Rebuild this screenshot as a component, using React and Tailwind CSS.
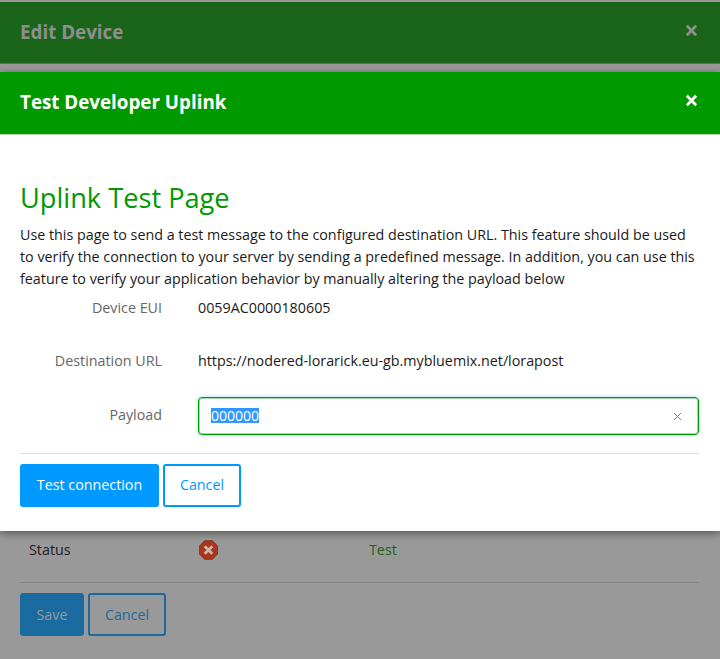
const font = "font-['Open_Sans',sans-serif]";

function Cross({ className }) {
  return (
    <svg viewBox="0 0 14 14" className={className} fill="none" stroke="currentColor" strokeWidth="3">
      <path d="M2 2 12 12M12 2 2 12" />
    </svg>
  );
}

function Row({ label, children, className }) {
  return (
    <div className={`flex items-center ${className}`}>
      <div className="w-[142px] text-right text-[#666666]">{label}</div>
      <div className="ml-[36px] flex-1 text-[#1a1a1a]">{children}</div>
    </div>
  );
}

export default function App() {
  return (
    <div className={`relative h-[659px] w-[720px] overflow-hidden bg-[#999999] pt-[2px] text-[14.3px] leading-[21px] ${font}`}>
      <div className="flex h-[62px] items-center justify-between border-b border-[#4f7a4f] bg-[#1b651b] pl-5 pr-[22px] text-[#8f8f8f]">
        <span className="text-[18.8px] font-bold">Edit Device</span>
        <Cross className="h-[13px] w-[13px] -translate-y-[2px]" />
      </div>

      <div className="mt-[475px] flex items-center pl-5 pr-[21px]">
        <div className="ml-[9px] w-[169px] text-[#1f1f1f]">Status</div>
        <div className="w-[171px]">
          <svg viewBox="0 0 20 20" className="ml-px h-5 w-[19px]">
            <path d="M6 0h8l6 6v8l-6 6H6l-6-6V6z" fill="#a8351c" stroke="#7f2a17" strokeWidth="0.6" />
            <path d="M6 6 14 14M14 6 6 14" stroke="#c9b4ae" strokeWidth="3" />
          </svg>
        </div>
        <span className="text-[#1b651b]">Test</span>
      </div>
      <div className="ml-5 mr-[21px] mt-[22px] h-px bg-[#858585]" />
      <div className="mx-5 mt-[10px] flex gap-1">
        <div className="flex h-[43px] w-[64px] items-center justify-center rounded-[3px] bg-[#1a6b9f] text-[#999999]">Save</div>
        <div className="flex h-[43px] w-[78px] items-center justify-center rounded-[3px] border-2 border-[#1a6b9f] text-[#1a6b9f]">Cancel</div>
      </div>

      <div className="absolute left-0 right-0 top-[72px] h-[459px] bg-white shadow-[0_2px_8px_rgba(0,0,0,0.45)]">
        <div className="flex h-[63px] items-center justify-between border-b border-[#b3d9b3] bg-[#009900] pl-5 pr-[22px] text-white">
          <span className="-translate-y-px text-[18.8px] font-bold">Test Developer Uplink</span>
          <Cross className="h-[13px] w-[13px] -translate-y-[3px]" />
        </div>
        <div className="pl-5 pr-[21px] pt-[45px]">
          <h1 className="text-[27.2px] leading-[36px] text-[#009900]">Uplink Test Page</h1>
          <p className="mt-[8px] leading-[22px] text-[#1a1a1a]">
            Use this page to send a test message to the configured destination URL. This feature should be used to verify the connection to your server by sending a predefined message. In addition, you can use this feature to verify your application behavior by manually altering the payload below
          </p>
          <Row label="Device EUI" className="h-[34px]">0059AC0000180605</Row>
          <Row label="Destination URL" className="mt-[19px] h-[34px]">https://nodered-lorarick.eu-gb.mybluemix.net/lorapost</Row>
          <div className="mt-[20px] flex h-[38px] items-center">
            <div className="w-[142px] -translate-y-[2px] text-right text-[#666666]">Payload</div>
            <div className="ml-[36px] flex h-[38px] flex-1 items-center justify-between rounded-[4px] border border-[#009900] pl-3 pr-4 shadow-[inset_0_0_0_1px_rgba(0,153,0,0.35),0_0_4px_rgba(0,140,255,0.35)]">
              <span className="-translate-y-px bg-[#3297fd] text-[14px] leading-[15px] text-white">000000</span>
              <svg viewBox="0 0 10 10" className="h-[9px] w-[9px] text-[#666666]" fill="none" stroke="currentColor" strokeWidth="0.9">
                <path d="M1 1 9 9M9 1 1 9" />
              </svg>
            </div>
          </div>
          <div className="mt-[18px] h-px bg-[#dddddd]" />
          <div className="mt-[10px] flex gap-1">
            <div className="flex h-[43px] w-[139px] items-center justify-center rounded-[3px] bg-[#0099ff] pb-[2px] text-white">Test connection</div>
            <div className="flex h-[43px] w-[78px] items-center justify-center rounded-[3px] border-2 border-[#0099ff] pb-[2px] text-[#0099ff]">Cancel</div>
          </div>
        </div>
      </div>
    </div>
  );
}
